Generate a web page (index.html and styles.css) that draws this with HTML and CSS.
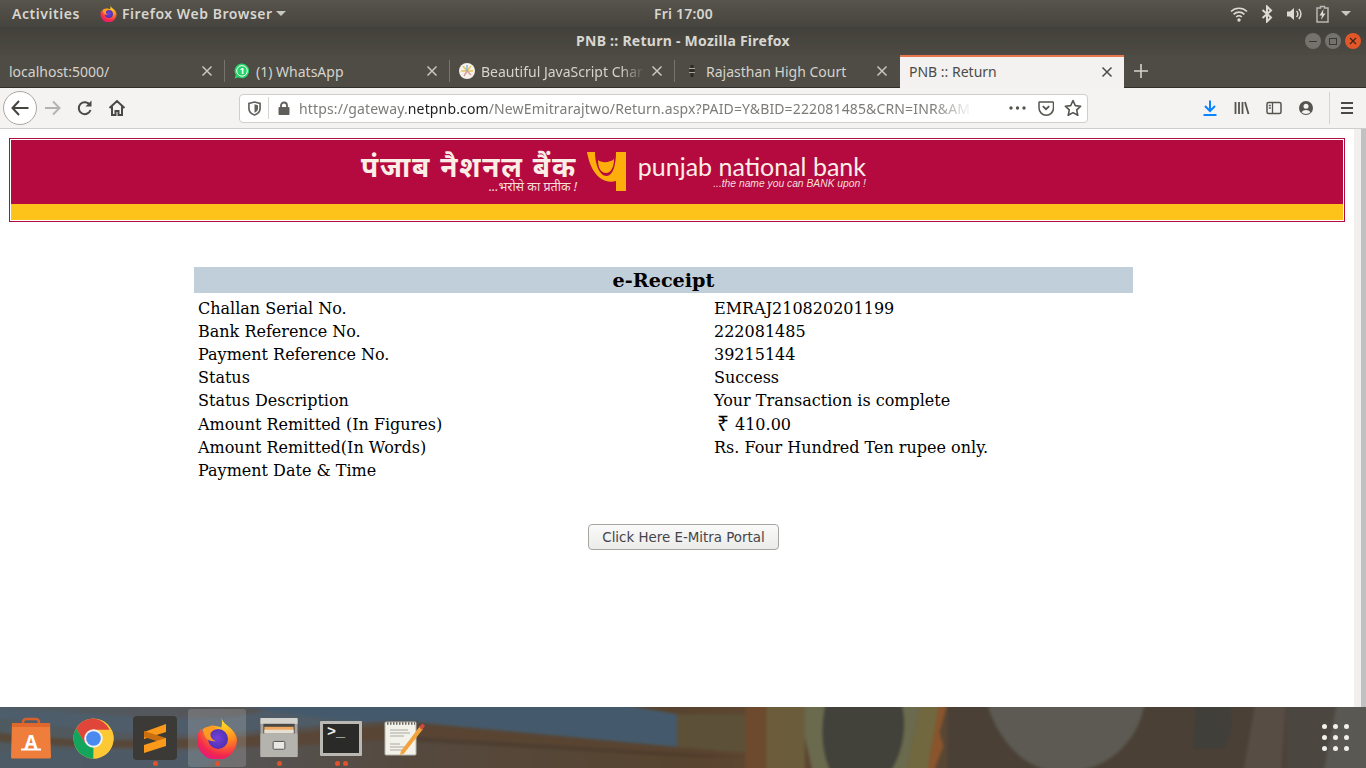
FILE: index.html
```html
<!DOCTYPE html>
<html lang="en">
<head>
<meta charset="utf-8">
<title>PNB :: Return</title>
<link rel="stylesheet" href="styles.css">
</head>
<body>
<header class="chrome">
  <div class="topbar">
    <div class="top-left">
      <span class="top-label">Activities</span>
      <span class="app-menu">
        <svg class="ff-small" viewBox="0 0 40 40"><use href="#ff"/></svg>
        <span class="top-label">Firefox Web Browser</span>
        <i class="caret menu-caret"></i>
      </span>
    </div>
    <span class="top-label clock">Fri 17:00</span>
    <div class="tray">
      <svg width="18" height="16" viewBox="0 0 18 16"><path d="M1 5.500a11.500 11.500 0 0 1 16 0M3.600 8.300a7.800 7.800 0 0 1 10.800 0M6.200 11a4 4 0 0 1 5.600 0" fill="none" stroke="#dcdad5" stroke-width="1.600"/><circle cx="9" cy="14" r="1.700" fill="#dcdad5"/></svg>
      <svg width="12" height="18" viewBox="0 0 12 18"><path d="M1.500 5 10 12.500 6 16.500V1.500L10 5.500 1.500 13" fill="none" stroke="#dcdad5" stroke-width="2"/></svg>
      <svg width="17" height="16" viewBox="0 0 17 16"><path d="M1 5.500h3L8 2v12L4 10.500H1z" fill="#dcdad5"/><path d="M10.500 5a4 4 0 0 1 0 6M12.800 3a7 7 0 0 1 0 10" fill="none" stroke="#dcdad5" stroke-width="1.500"/></svg>
      <svg width="13" height="18" viewBox="0 0 13 18"><path d="M4.500 1.500h4V3H12v14H1V3h3.500z" fill="none" stroke="#b9b7b1" stroke-width="1.500"/><path d="M7.500 4 3.500 10.500h2.500L5 15l4.500-6.500H7z" fill="#dcdad5"/></svg>
      <i class="caret tray-caret"></i>
    </div>
  </div>
  <div class="titlebar">
    <span class="title">PNB :: Return - Mozilla Firefox</span>
    <div class="winbtns">
      <span class="winbtn"><i class="w-min"></i></span>
      <span class="winbtn"><i class="w-max"></i></span>
      <span class="winbtn close">
        <svg width="8" height="8" viewBox="0 0 8 8"><path d="M1 1l6 6M7 1 1 7" stroke="#3c2417" stroke-width="1.200"/></svg>
      </span>
    </div>
  </div>
  <div class="tabbar">
    <div class="tab sep">
      <span class="tab-label">localhost:5000/</span>
      <svg class="tab-x" viewBox="0 0 12 12"><path d="M1.500 1.500l9 9M10.500 1.500l-9 9"/></svg>
    </div>
    <div class="tab sep">
      <svg class="favicon" viewBox="0 0 16 16"><path d="M8 .5a7.400 7.400 0 0 0-6.300 11.300L.6 15.500l3.800-1A7.400 7.400 0 1 0 8 .5z" fill="#25d366"/><circle cx="8" cy="7.900" r="5.300" fill="#25d366" stroke="#fff" stroke-width="1"/><text x="8" y="11" class="wa-num">1</text></svg>
      <span class="tab-label">(1) WhatsApp</span>
      <svg class="tab-x" viewBox="0 0 12 12"><path d="M1.500 1.500l9 9M10.500 1.500l-9 9"/></svg>
    </div>
    <div class="tab sep">
      <svg class="favicon" viewBox="0 0 16 16"><circle cx="8" cy="8" r="8" fill="#f4f2ea"/><path d="M8 8 4 3M8 8l4-5M8 8H2M8 8h6" stroke="#e8c45a" stroke-width="1.500"/><path d="M8 8l-3 5M8 8l4 4" stroke="#d9a0a0" stroke-width="1.500"/><path d="M8 8V2" stroke="#7fb6d8" stroke-width="1.500"/></svg>
      <span class="tab-label fade">Beautiful JavaScript Char</span>
      <svg class="tab-x" viewBox="0 0 12 12"><path d="M1.500 1.500l9 9M10.500 1.500l-9 9"/></svg>
    </div>
    <div class="tab">
      <svg class="favicon" viewBox="0 0 16 16"><path d="M6.500 2h3v3h-3zM5.500 6h5v3h-5zM6.500 10h3v4h-3z" fill="#2c2b28"/><path d="M5 5.500h6M5 9.500h6" stroke="#a8a69f"/></svg>
      <span class="tab-label">Rajasthan High Court</span>
      <svg class="tab-x" viewBox="0 0 12 12"><path d="M1.500 1.500l9 9M10.500 1.500l-9 9"/></svg>
    </div>
    <div class="tab active">
      <span class="tab-label">PNB :: Return</span>
      <svg class="tab-x" viewBox="0 0 12 12"><path d="M1.500 1.500l9 9M10.500 1.500l-9 9"/></svg>
    </div>
    <svg class="newtab" viewBox="0 0 14 14"><path d="M7 0v14M0 7h14"/></svg>
  </div>
  <nav class="navbar">
    <div class="nav-left">
      <span class="back">
        <svg width="18" height="16" viewBox="0 0 18 16"><path d="M8 1 1.500 8 8 15M2 8h15.500" fill="none" stroke="#45443f" stroke-width="2"/></svg>
      </span>
      <svg class="nav-ic" viewBox="0 0 18 18"><path d="M9 2.500 15.500 9 9 15.500M15 9H1" fill="none" stroke="#b4b3af" stroke-width="2"/></svg>
      <svg class="nav-ic" viewBox="0 0 18 18"><path d="M14.500 11a6 6 0 1 1-.6-5" fill="none" stroke="#4a4945" stroke-width="2"/><path d="M15.500 1.500v6h-6z" fill="#4a4945"/></svg>
      <svg class="nav-ic" viewBox="0 0 18 18"><path d="M1.500 9 9 2l7.500 7M4 7.500V16h3.500v-4h3v4H14V7.500" fill="none" stroke="#4a4945" stroke-width="2"/></svg>
    </div>
    <div class="urlbar">
      <svg class="shield" viewBox="0 0 14 16"><path d="M7 1 13 2.500V8c0 3.500-2.500 5.800-6 7-3.500-1.200-6-3.500-6-7V2.500z" fill="none" stroke="#62615c" stroke-width="1.800"/><path d="M7 3.500 10.800 4.500V8c0 2-1.500 3.500-3.800 4.500z" fill="#62615c"/></svg>
      <i class="url-sep"></i>
      <svg class="lock" viewBox="0 0 12 14"><path d="M3 6V4.500a3 3 0 0 1 6 0V6" fill="none" stroke="#5f5e5a" stroke-width="1.800"/><rect x="0.500" y="6" width="11" height="8" rx="1" fill="#5f5e5a"/></svg>
      <span class="url">https://gateway.<b>netpnb.com</b>/NewEmitrarajtwo/Return.aspx?PAID=Y&amp;BID=222081485&amp;CRN=INR&amp;AM</span>
      <svg class="dots" viewBox="0 0 17 4"><circle cx="2" cy="2" r="1.700"/><circle cx="8.500" cy="2" r="1.700"/><circle cx="15" cy="2" r="1.700"/></svg>
      <svg class="url-ic" viewBox="0 0 16 16"><path d="M1.500 2h13a1 1 0 0 1 1 1v5a7 7 0 0 1-14.500 0V3a1 1 0 0 1 .5-1z" fill="none" stroke="#55544f" stroke-width="1.500"/><path d="M4.800 6.200 8 9.200l3.200-3" fill="none" stroke="#55544f" stroke-width="1.800"/></svg>
      <svg class="url-ic star" viewBox="0 0 18 18"><path d="M9 1.500 11.300 6.600l5.400.6-4 3.700 1.100 5.400L9 13.600l-4.800 2.700 1.100-5.400-4-3.700 5.400-.6z" fill="none" stroke="#55544f" stroke-width="1.600" stroke-linejoin="round"/></svg>
    </div>
    <div class="nav-right">
      <svg class="nav-ic2" viewBox="0 0 16 16"><path d="M8 .5v10M3 6l5 5 5-5" fill="none" stroke="#0a84ff" stroke-width="2"/><path d="M1.500 15h13" stroke="#0a84ff" stroke-width="2"/></svg>
      <svg class="nav-ic2" viewBox="0 0 16 16"><path d="M1.500 2v12M5 2v12M8.500 2v12M11 2l3.500 12" fill="none" stroke="#55544f" stroke-width="1.800"/></svg>
      <svg class="nav-ic2" viewBox="0 0 16 16"><rect x="1" y="2.500" width="14" height="11" rx="1.500" fill="none" stroke="#55544f" stroke-width="1.500"/><path d="M6.500 2.500v11M2.800 5.500h2M2.800 8h2" stroke="#55544f" stroke-width="1.300"/></svg>
      <svg class="nav-ic2" viewBox="0 0 16 16"><circle cx="8" cy="8" r="7" fill="#55544f"/><circle cx="8" cy="6.300" r="2.500" fill="#f4f3f1"/><path d="M3.500 12.300a5 4 0 0 1 9 0A6.500 6.500 0 0 1 3.500 12.300z" fill="#f4f3f1"/></svg>
      <i class="nav-sep"></i>
      <svg class="nav-ic2" viewBox="0 0 16 16"><path d="M2 3h12M2 8h12M2 13h12" stroke="#4a4945" stroke-width="2"/></svg>
    </div>
  </nav>
</header>

<div class="viewport">
  <main class="page">
    <div class="banner">
      <div class="banner-red">
        <div class="logo">
          <div class="logo-hi">
            <span class="hi-main">पंजाब नैशनल बैंक</span>
            <span class="hi-sub">...भरोसे का प्रतीक !</span>
          </div>
          <svg class="pnb-mark" width="39" height="39" viewBox="0 0 39 39"><path d="M0 0H8C8 13 13 24 19.500 24 26 24 29 13 29 0H39V39H29V29C13 33 3 18 0 0Z" fill="#fdae0b"/><path d="M11 8C14 11 23 11 27 7 27 15 24 21 19 21 14 21 11 16 11 8Z" fill="#fdae0b"/></svg>
          <div class="logo-en">
            <span class="en-main">punjab national bank</span>
            <span class="en-sub">...the name you can BANK upon !</span>
          </div>
        </div>
      </div>
      <div class="banner-yellow"></div>
    </div>

    <table class="receipt">
      <colgroup><col class="col-k"><col></colgroup>
      <thead>
        <tr><th colspan="2">e-Receipt</th></tr>
      </thead>
      <tbody>
        <tr><td>Challan Serial No.</td><td>EMRAJ210820201199</td></tr>
        <tr><td>Bank Reference No.</td><td>222081485</td></tr>
        <tr><td>Payment Reference No.</td><td>39215144</td></tr>
        <tr><td>Status</td><td>Success</td></tr>
        <tr><td>Status Description</td><td>Your Transaction is complete</td></tr>
        <tr class="rupee-row"><td>Amount Remitted (In Figures)</td><td><span class="rupee">₹</span>410.00</td></tr>
        <tr><td>Amount Remitted(In Words)</td><td>Rs. Four Hundred Ten rupee only.</td></tr>
        <tr><td>Payment Date &amp; Time</td><td></td></tr>
      </tbody>
    </table>

    <div class="action"><button class="portal" type="button">Click Here E-Mitra Portal</button></div>
  </main>
  <div class="scrollbar"><div class="thumb"></div></div>
</div>

<footer class="dock">
  <svg class="wallpaper" viewBox="0 0 1366 61" preserveAspectRatio="none">
    <defs>
      <linearGradient id="wp" x1="0" x2="1" y1="0" y2="0">
        <stop offset="0" stop-color="#4e5a60"/>
        <stop offset=".14" stop-color="#55565a"/>
        <stop offset=".3" stop-color="#55493e"/>
        <stop offset=".5" stop-color="#57432f"/>
        <stop offset=".55" stop-color="#5e4630"/>
        <stop offset="1" stop-color="#4a463f"/>
      </linearGradient>
    </defs>
    <rect width="1366" height="61" fill="url(#wp)"/>
    <path d="M0 4C90 8 160 16 240 12L300 0H400V16C300 20 220 32 120 26 60 22 20 14 0 14Z" fill="#4d5f6f" opacity=".75"/>
    <path d="M0 44C80 38 160 44 230 42L200 61H0Z" fill="#4c5b68" opacity=".8"/>
    <path d="M230 0H613L677 10V39L417 17 400 16C340 18 290 10 230 0Z" fill="#445a6c"/>
    <path d="M0 26C90 36 190 36 417 18L677 40 745 48V47L417 30C300 40 120 44 0 34Z" fill="#5a4431" opacity=".8"/>
    <path d="M417 30 745 48H700L417 34Z" fill="#3f3023" opacity=".4"/>
    <path d="M677 10 H745V44L677 39Z" fill="#5c5038"/>
    <rect x="745" width="21" height="61" fill="#6d4a2e"/>
    <rect x="766" width="38" height="61" fill="#6b5d3c"/>
    <path d="M804 0H919L912 30 905 61H812L804 30Z" fill="#6a6a4e"/>
    <path d="M919 0H938L930 40 926 61H905L912 30Z" fill="#726840"/>
    <path d="M938 0H946L938 26 942 38 932 61H926L930 40Z" fill="#8a552c"/>
    <path d="M825 0H900C906 20 902 42 889 61H830C820 42 820 20 825 0Z" fill="#42413a"/>
    <rect x="946" width="420" height="61" fill="#4a4036"/>
    <path d="M985 0H1142C1136 34 1105 61 1061 61 1020 61 995 30 985 0Z" fill="#5c5a52"/>
    <path d="M1193 0H1227L1229 22 1222 40H1190Z" fill="#403f39"/>
    <path d="M1252 0H1282L1278 61H1240Z" fill="#5b5048" opacity=".8"/>
    <rect x="1282" width="51" height="61" fill="#4b4640"/>
    <path d="M1333 0H1366V61H1320Z" fill="#5a5852"/>
  </svg>
  <div class="dock-items">
    <div class="dock-item">
      <svg class="d-store" viewBox="0 0 40 42"><path d="M12 9V5a3 3 0 0 1 3-3h10a3 3 0 0 1 3 3v4" fill="none" stroke="#d9602c" stroke-width="2.500"/><path d="M1 6h38l1 34a1.500 1.500 0 0 1-1.500 1.500h-37A1.500 1.500 0 0 1 0 40z" fill="#ef7d3c"/><path d="M1 6h38l.2 4H.8z" fill="#e0682d"/><text x="20" y="32" class="store-a">A</text><path d="M10 32.500h20" stroke="#fff" stroke-width="2"/></svg>
    </div>
    <div class="dock-item">
      <svg class="d-chrome" viewBox="0 0 42 42"><circle cx="21" cy="21" r="20.500" fill="#fcc934"/><path d="M21 .5A20.500 20.500 0 0 0 3.200 10.800L13 27.500l8-6.500h18.500A20.500 20.500 0 0 0 21 .5z" fill="#e0453a"/><path d="M3.200 10.800A20.500 20.500 0 0 0 21 41.500L30 27l-9-6-8 6z" fill="#12a55b"/><path d="M39.500 12H21v18l-.200 11.500A20.500 20.500 0 0 0 39.500 12z" fill="#fcc934"/><circle cx="21" cy="21" r="9.500" fill="#f1f1f1"/><circle cx="21" cy="21" r="7.500" fill="#4a8af0"/></svg>
    </div>
    <div class="dock-item">
      <div class="d-sublime">
        <svg width="22" height="29" viewBox="0 0 22 29"><path d="M22 0v8L0 15V8z" fill="#fb9a1a"/><path d="M0 13l22 7v-6L0 7z" fill="#c96f10"/><path d="M22 14v8L0 29v-8z" fill="#fb9a1a"/></svg>
      </div>
      <i class="run"></i>
    </div>
    <div class="dock-item is-active">
      <svg class="d-ff" viewBox="0 0 40 40"><use href="#ff"/></svg>
      <i class="run"></i>
    </div>
    <div class="dock-item">
      <svg class="d-files" viewBox="0 0 38 42"><rect x="0" y="0" width="38" height="40" rx="2" fill="#a7a6a1"/><rect x="0" y="0" width="38" height="6" fill="#d3d2cd"/><rect x="3" y="6" width="32" height="10" fill="#4a4844"/><path d="M4 9h30v6H4z" fill="#f0a860"/><path d="M4 12h30v4H4z" fill="#e5dfd2"/><rect x="0" y="16" width="38" height="24" fill="#b4b3ae"/><rect x="13" y="24" width="12" height="8" rx="1" fill="#e9e8e4" stroke="#55544f"/></svg>
      <i class="run"></i>
    </div>
    <div class="dock-item">
      <div class="d-term"><span class="prompt">&gt;_</span></div>
      <span class="runs"><i class="run-static"></i><i class="run-static"></i></span>
    </div>
    <div class="dock-item">
      <svg class="d-note" viewBox="0 0 42 36"><rect x="1" y="2" width="31" height="33" rx="1" fill="#f2f1ea" stroke="#b7b6ad"/><path d="M3 3.500h28" stroke="#66655f" stroke-width="2.500" stroke-dasharray="1.500 1.500"/><path d="M6 10h18M6 13h20M6 16h14M6 24h10M6 27h16M6 30h12" stroke="#a9a89f"/><path d="M17 31l-1 4 4-1.500L39 9l-3-3z" fill="#f2a33c"/><path d="M35 7l3 3 3-4-2.500-2.500z" fill="#cf4b3e"/></svg>
    </div>
  </div>
  <div class="app-grid">
    <i></i><i></i><i></i><i></i><i></i><i></i><i></i><i></i><i></i>
  </div>
</footer>

<svg class="defs" width="0" height="0" viewBox="0 0 40 40">
  <defs>
    <radialGradient id="ffg" cx=".7" cy=".1" r="1"><stop offset="0" stop-color="#ffe226"/><stop offset=".45" stop-color="#ff8a1f"/><stop offset=".8" stop-color="#f2264f"/><stop offset="1" stop-color="#e31587"/></radialGradient>
    <radialGradient id="ffp" cx=".45" cy=".45" r=".6"><stop offset="0" stop-color="#7442d6"/><stop offset="1" stop-color="#4b2fb0"/></radialGradient>
    <symbol id="ff" viewBox="0 0 40 40">
      <path d="M24 0c1 4 3 6 7 9 5 4 8 9 8 13a19 19 0 0 1-38 0c0-4 1-8 4-11 0 2 1 3 2 4 1-3 4-6 8-7 3 0 7 1 9 2 1-3 1-6 0-10z" fill="url(#ffg)"/>
      <circle cx="21" cy="21" r="9.500" fill="url(#ffp)"/>
      <path d="M6 12c3-3 8-4 13-2l-5 5c-1 3 1 7 5 8-5 1-10-2-11-6z" fill="#ff9a22"/>
    </symbol>
  </defs>
</svg>
</body>
</html>
```
FILE: styles.css
```css
* { box-sizing: border-box; }
html, body { margin: 0; padding: 0; }
body {
  width: 1366px;
  height: 768px;
  overflow: hidden;
  display: flex;
  flex-direction: column;
  background: #fff;
}
i { display: block; }
svg { display: block; flex: none; }
.defs { position: absolute; }

/* window chrome */
.chrome {
  flex: none;
  font-family: "Noto Sans", "Open Sans", sans-serif;
}
.topbar {
  height: 27px;
  display: flex;
  align-items: center;
  justify-content: space-between;
  padding: 0 12px;
  position: relative;
  background: linear-gradient(#57544c, #46443e);
}
.top-left { display: flex; align-items: center; gap: 20px; }
.top-label {
  font-size: 14px;
  font-weight: 600;
  color: #d8d6d0;
  letter-spacing: .55px;
  white-space: nowrap;
}
.app-menu { display: flex; align-items: center; gap: 5px; }
.ff-small { width: 17px; height: 17px; }
.caret {
  width: 0;
  height: 0;
  border-left: 5px solid transparent;
  border-right: 5px solid transparent;
  border-top: 5px solid #c9c7c1;
}
.menu-caret { margin-left: -2px; }
.clock { position: absolute; left: 654px; top: 4px; letter-spacing: .2px; }
.tray { display: flex; align-items: center; gap: 13px; padding-right: 3px; }
.tray-caret { margin-left: -1px; }

.titlebar {
  height: 28px;
  display: flex;
  align-items: center;
  justify-content: center;
  position: relative;
  padding-bottom: 2px;
  background: linear-gradient(#41403a, #4d4a43);
}
.title { font-size: 14px; font-weight: 700; color: #d8d6d0; letter-spacing: .26px; }
.winbtns {
  position: absolute;
  right: 5px;
  top: 6px;
  display: flex;
  gap: 4px;
}
.winbtn {
  width: 16px;
  height: 16px;
  border-radius: 50%;
  background: #74726c;
  display: flex;
  align-items: center;
  justify-content: center;
}
.winbtn.close { background: #e2572a; }
.w-min { width: 8px; height: 1px; background: #3a3934; }
.w-max { width: 8px; height: 7px; border: 1px solid #3a3934; }

.tabbar {
  height: 33px;
  display: flex;
  align-items: stretch;
  border-bottom: 1px solid #2f2e2a;
  background: #4f4c45;
}
.tab {
  width: 225px;
  display: flex;
  align-items: center;
  gap: 6px;
  padding: 0 12px 0 9px;
  position: relative;
}
.tab.sep::after {
  content: "";
  position: absolute;
  right: 0;
  top: 5px;
  bottom: 5px;
  width: 1px;
  background: #76746d;
}
.tab-label {
  flex: 1;
  min-width: 0;
  overflow: hidden;
  white-space: nowrap;
  font-size: 14px;
  color: #d5d3cd;
}
.fade {
  -webkit-mask-image: linear-gradient(90deg, #000 85%, transparent);
  mask-image: linear-gradient(90deg, #000 85%, transparent);
}
.tab-x {
  width: 12px;
  height: 12px;
  fill: none;
  stroke: #c9c7c1;
  stroke-width: 1.500;
}
.favicon { width: 16px; height: 16px; }
.wa-num { font: 700 9px "Noto Sans", sans-serif; fill: #fff; text-anchor: middle; }
.tab.active {
  width: 224px;
  background: #f3f2f0;
  border-top: 2px solid #e9754d;
  margin-bottom: -1px;
  padding-bottom: 2px;
  padding-right: 11px;
}
.tab.active .tab-label { color: #4c4b47; }
.tab.active .tab-x { stroke: #4c4b47; }
.newtab {
  width: 14px;
  height: 14px;
  margin: 9px 0 0 10px;
  fill: none;
  stroke: #d5d3cd;
  stroke-width: 1.600;
}

/* toolbar */
.navbar {
  height: 41px;
  background: #f4f3f1;
  border-bottom: 1px solid #cfcecb;
  display: flex;
  align-items: center;
  padding-right: 10px;
  font-family: "Noto Sans", sans-serif;
}
.nav-left {
  flex: none;
  width: 239px;
  display: flex;
  align-items: center;
  padding-left: 3px;
  gap: 14px;
}
.back {
  width: 34px;
  height: 34px;
  border-radius: 50%;
  background: #fff;
  border: 1px solid #a9a8a4;
  display: flex;
  align-items: center;
  justify-content: center;
  margin-right: -7px;
}
.nav-ic { width: 18px; height: 18px; }
.urlbar {
  flex: none;
  width: 849px;
  height: 29px;
  background: #fff;
  border: 1px solid #cfcecb;
  border-radius: 4px;
  display: flex;
  align-items: center;
  padding: 0 5px 0 8px;
}
.shield { width: 13px; height: 15px; }
.url-sep { width: 1px; height: 22px; background: #d5d4d1; margin: 0 9px 0 7px; }
.lock { width: 12px; height: 14px; }
.url {
  flex: 1;
  min-width: 0;
  margin: 0 36px 0 9px;
  font-size: 14px;
  letter-spacing: .14px;
  color: #7d7c78;
  overflow: hidden;
  white-space: nowrap;
  -webkit-mask-image: linear-gradient(90deg, #000 94%, transparent);
  mask-image: linear-gradient(90deg, #000 94%, transparent);
}
.url b { font-weight: 400; color: #1f1e1c; }
.dots { width: 17px; height: 4px; fill: #55544f; margin-right: 2px; }
.url-ic { width: 16px; height: 16px; margin-left: 10px; }
.star { width: 18px; height: 18px; }
.nav-right {
  flex: 1;
  display: flex;
  align-items: center;
  padding-left: 114px;
  gap: 16px;
}
.nav-ic2 { width: 16px; height: 16px; }
.nav-sep { width: 1px; height: 32px; background: #d5d4d1; margin: 0 -7px 0 -1px; }

/* page */
.viewport { flex: 1; min-height: 0; display: flex; }
.page {
  flex: 1;
  min-width: 0;
  padding: 9px 9px 0;
  background: #fff;
  font-family: "DejaVu Serif", serif;
  color: #000;
}
.scrollbar { width: 12px; background: #f1f0ee; padding-left: 7px; }
.thumb { height: 100%; background: #c1c1c1; }

.banner {
  width: 1336px;
  height: 84px;
  border: 1px solid #b30a40;
  padding: 1px;
}
.banner-red {
  height: 64px;
  background: #b50a40;
  display: flex;
  padding-left: 342px;
}
.banner-yellow { height: 16px; background: #fec31a; }
.logo {
  display: flex;
  align-items: flex-start;
  padding-top: 12px;
}
.logo-hi { width: 224px; display: flex; flex-direction: column; align-items: flex-end; margin-right: 10px; }
.hi-main {
  font: 700 28px/28px "Noto Sans", "Noto Sans Devanagari", "Lohit Devanagari", sans-serif;
  letter-spacing: 1.800px;
  color: #fbeee6;
  white-space: nowrap;
}
.hi-sub {
  font: italic 12.500px/14px "Noto Sans", sans-serif;
  color: #f6dfd8;
  white-space: nowrap;
}
.pnb-mark { margin-right: 11px; }
.logo-en { width: 229px; display: flex; flex-direction: column; align-items: flex-end; }
.en-main {
  font: 400 25px/28px "Lato", sans-serif;
  color: #fbeee6;
  white-space: nowrap;
}
.en-sub {
  font: italic 10.300px/12px "Liberation Sans", sans-serif;
  color: #f6dfd8;
  white-space: nowrap;
  margin-top: -2px;
}

.receipt {
  width: 939px;
  margin: 45px 0 0 185px;
  border-collapse: collapse;
  table-layout: fixed;
  font-size: 16px;
}
.col-k { width: 516px; }
.receipt th {
  height: 26px;
  padding: 0;
  background: #c1cfda;
  font-size: 19.200px;
  font-weight: 700;
  text-align: center;
}
.receipt td {
  height: 23px;
  padding: 0 0 0 4px;
  line-height: 23px;
  white-space: nowrap;
}
.receipt tbody tr:first-child td { height: 27px; padding-top: 4px; }
.rupee-row td { height: 24px; padding-top: 1px; }
.rupee {
  display: inline-block;
  width: 21px;
  padding-left: 3px;
  font: 21px/20px "Noto Sans", sans-serif;
  vertical-align: -1px;
}

.action { display: flex; justify-content: center; margin-top: 42px; padding-left: 13px; }
.portal {
  width: 191px;
  height: 26px;
  padding: 0;
  border: 1px solid #a6a5a1;
  border-radius: 4px;
  background: linear-gradient(#fafafa, #ebebe9);
  font: 13.400px "DejaVu Sans", sans-serif;
  color: #45444a;
}

/* launcher */
.dock {
  flex: none;
  height: 61px;
  position: relative;
  overflow: hidden;
  background: #4e4a42;
  display: flex;
  align-items: stretch;
  justify-content: space-between;
}
.wallpaper {
  position: absolute;
  left: -4px;
  top: -4px;
  width: 1374px;
  height: 69px;
  filter: blur(1.500px);
}
.dock-items { position: relative; display: flex; }
.dock-item {
  width: 62px;
  position: relative;
  display: flex;
  align-items: center;
  justify-content: center;
  padding-top: 1px;
}
.is-active::before {
  content: "";
  position: absolute;
  left: 2px;
  right: 2px;
  top: 2px;
  bottom: 1px;
  border-radius: 3px;
  background: rgba(255,255,255,.16);
}
.dock-item svg { position: relative; }
.d-store { width: 40px; height: 42px; }
.d-chrome { width: 41px; height: 41px; }
.d-sublime {
  width: 44px;
  height: 44px;
  border-radius: 4px;
  background: #3c3a37;
  display: flex;
  align-items: center;
  justify-content: center;
}
.d-ff { width: 42px; height: 42px; }
.d-files { width: 38px; height: 41px; }
.d-term {
  width: 42px;
  height: 35px;
  background: #2a2a28;
  border: 3px solid #b9b8b3;
  border-radius: 1px;
  padding: 1px 0 0 4px;
}
.prompt { display: block; font: 700 15px/16px "Liberation Mono", monospace; color: #f0f0ee; }
.d-note { width: 42px; height: 36px; margin-left: 4px; }
.store-a { font: 700 19px "Noto Sans", sans-serif; fill: #fff; text-anchor: middle; }
.run, .run-static {
  width: 5px;
  height: 5px;
  border-radius: 50%;
  background: #e2522a;
}
.run { position: absolute; left: 50%; margin-left: -2px; bottom: 2px; }
.runs { position: absolute; left: 50%; margin-left: -6px; bottom: 2px; display: flex; gap: 3px; }
.app-grid {
  position: relative;
  align-self: center;
  margin-right: 17px;
  display: grid;
  grid-template-columns: repeat(3, 5px);
  grid-auto-rows: 5px;
  gap: 6px 6px;
}
.app-grid i { border-radius: 50%; background: #f1f0ec; }
```
